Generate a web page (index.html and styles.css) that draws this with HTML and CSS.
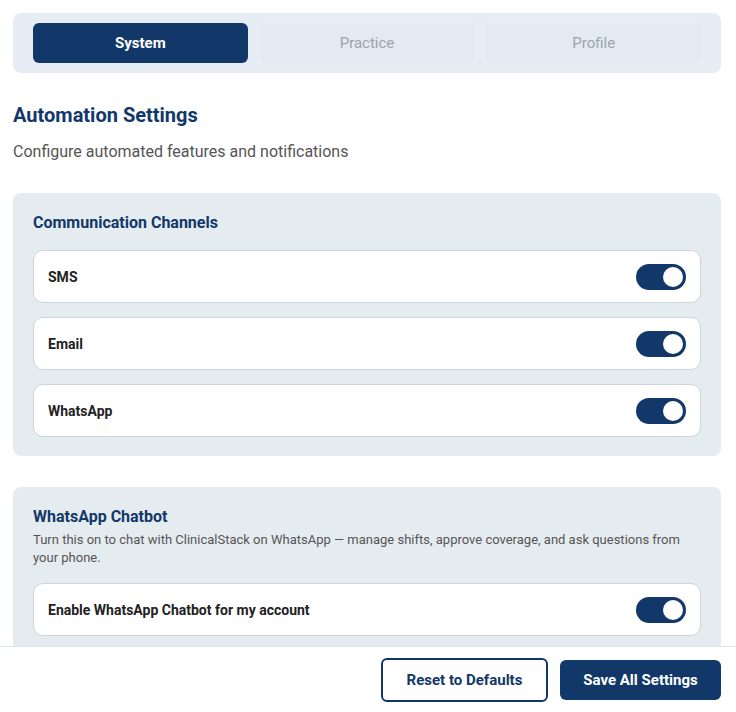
FILE: index.html
```html
<!DOCTYPE html>
<html lang="en">
<head>
    <meta charset="UTF-8">
    <meta name="viewport" content="width=device-width, initial-scale=1.0">
    <title>Automation Settings</title>
    <link rel="stylesheet" href="styles.css">
</head>
<body>
    <div class="page">
        <div class="tabs">
            <div class="tab active">System</div>
            <div class="tab">Practice</div>
            <div class="tab">Profile</div>
        </div>

        <h2 class="title">Automation Settings</h2>
        <p class="subtitle">Configure automated features and notifications</p>

        <div class="card">
            <h3 class="card-title">Communication Channels</h3>
            <div class="rows">
                <div class="row">
                    <span class="label">SMS</span>
                    <span class="toggle"></span>
                </div>
                <div class="row">
                    <span class="label">Email</span>
                    <span class="toggle"></span>
                </div>
                <div class="row">
                    <span class="label">WhatsApp</span>
                    <span class="toggle"></span>
                </div>
            </div>
        </div>

        <div class="card">
            <h3 class="card-title">WhatsApp Chatbot</h3>
            <p class="card-desc">Turn this on to chat with ClinicalStack on WhatsApp — manage shifts, approve coverage, and ask questions from your phone.</p>
            <div class="rows">
                <div class="row">
                    <span class="label">Enable WhatsApp Chatbot for my account</span>
                    <span class="toggle"></span>
                </div>
            </div>
        </div>
    </div>

    <div class="footer">
        <button class="btn btn-outline">Reset to Defaults</button>
        <button class="btn btn-primary">Save All Settings</button>
    </div>
</body>
</html>
```

FILE: styles.css
```css
body {
    font-family: Roboto, "Liberation Sans", sans-serif;
    margin: 0;
    padding: 0;
    background: #fff;
    color: #222;
}
.page {
    padding: 13px 15px 120px 13px;
}
.tabs {
    display: flex;
    gap: 12px;
    padding: 10px 20px;
    background-color: #e6edf4;
    border-radius: 8px;
}
.tab {
    flex: 1;
    height: 40px;
    line-height: 40px;
    text-align: center;
    font-size: 15px;
    color: #9ba5ae;
    background-color: #e3eaf1;
    border-radius: 6px;
}
.tab.active {
    background-color: #12386a;
    color: #fff;
    font-weight: 700;
}
.title {
    margin: 30px 0 13px;
    font-size: 20px;
    line-height: 24px;
    font-weight: 700;
    color: #12386a;
}
.subtitle {
    margin: 0 0 29px;
    font-size: 16px;
    line-height: 24px;
    color: #555;
}
.card {
    background-color: #e5ecf0;
    border-radius: 8px;
    padding: 20px 20px 19px;
    margin-bottom: 31px;
}
.card-title {
    margin: 0;
    font-size: 16px;
    line-height: 20px;
    font-weight: 700;
    color: #12386a;
}
.card-desc {
    margin: 4px 0 0;
    font-size: 13px;
    line-height: 18px;
    color: #555;
}
.rows {
    display: flex;
    flex-direction: column;
    gap: 14px;
    margin-top: 17px;
}
.card-desc + .rows {
    margin-top: 16px;
}
.row {
    display: flex;
    align-items: center;
    justify-content: space-between;
    height: 51px;
    padding: 0 14px;
    background-color: #fff;
    border: 1px solid #cdd4db;
    border-radius: 10px;
}
.label {
    font-size: 14px;
    font-weight: 700;
    color: #222;
}
.toggle {
    position: relative;
    width: 50px;
    height: 26px;
    border-radius: 13px;
    background-color: #12386a;
}
.toggle::after {
    content: "";
    position: absolute;
    top: 3px;
    right: 3px;
    width: 20px;
    height: 20px;
    border-radius: 50%;
    background-color: #fff;
}
.footer {
    position: fixed;
    left: 0;
    right: 0;
    bottom: 0;
    height: 65px;
    display: flex;
    align-items: center;
    justify-content: flex-end;
    gap: 12px;
    padding: 0 15px;
    background-color: #fff;
    border-top: 1px solid #dfe3e7;
}
.btn {
    font-family: inherit;
    font-size: 15px;
    font-weight: 700;
    border-radius: 6px;
    cursor: pointer;
}
.btn-outline {
    width: 167px;
    height: 44px;
    background-color: #fff;
    color: #12386a;
    border: 2px solid #12386a;
}
.btn-primary {
    width: 161px;
    height: 40px;
    background-color: #12386a;
    color: #fff;
    border: none;
}
```
